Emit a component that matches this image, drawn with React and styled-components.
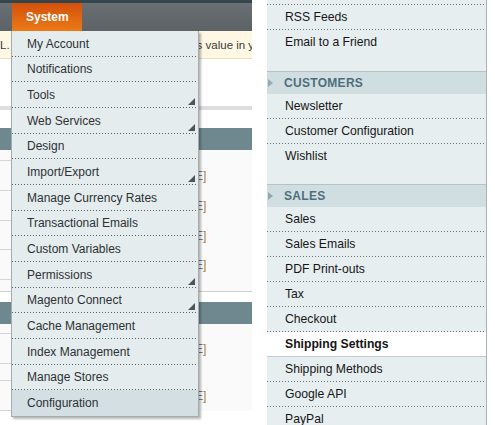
import React from 'react'
import styled, {createGlobalStyle} from 'styled-components'

const GlobalStyle=createGlobalStyle`
  body{
    margin:0;
    background:#fff;
    font-family:"Liberation Sans",Arial,sans-serif;
    font-size:12px;
  }
`

const dots=(color,bg)=>`
  background:linear-gradient(to right,${color} 1px,transparent 1px) left bottom/3px 1px repeat-x,${bg};
`

const Page=styled.div`
  display:flex;
  width:495px;
  height:425px;
  overflow:hidden;
`

/* ---------- left screenshot (admin page with open System menu) ---------- */

const Shot=styled.div`
  position:relative;
  width:252px;
  flex:none;
  overflow:hidden;
  background:#fff;
`

const NavBar=styled.div`
  height:28px;
  border-top:3px solid #34454c;
  background:linear-gradient(#6a6f73,#5d6266);
  padding-left:12px;
  display:flex;
  align-items:flex-end;
`

const Tab=styled.div`
  width:70px;
  height:28px;
  box-sizing:border-box;
  padding-left:14px;
  display:flex;
  align-items:center;
  color:#fff;
  font-weight:bold;
  font-size:12px;
  background:linear-gradient(#d4500b,#eb7a17);
`

const Notice=styled.div`
  height:27px;
  border-bottom:1px solid #eedfb6;
  background:#fdf7e3;
  color:#3b3b3b;
  display:flex;
  align-items:center;
  white-space:nowrap;
  overflow:hidden;
  font-size:11.5px;
`

const NoticeTail=styled.span`
  margin-left:187px;
`

const Blank=styled.div`
  height:${p=>p.h}px;
  background:${p=>p.bg||'#fff'};
`

const Rule=styled.div`
  height:${p=>p.h||1}px;
  background:${p=>p.color||'#dcdcdc'};
`

const SlateHead=styled.div`
  height:22px;
  background:#6f8890;
`

const Grid=styled.div`
  background:#fafafa;
`

const GridRow=styled.div`
  height:${p=>p.h}px;
  background:linear-gradient(${p=>p.line||'#d4d4d4'},${p=>p.line||'#d4d4d4'}) left bottom/${p=>p.full?'100%':'190px'} 1px no-repeat;
  display:flex;
  align-items:center;
  padding-left:195px;
  font-size:12px;
  color:#6b7b82;
`

const Bracket=styled.span`
  color:#b27a3c;
`

const Menu=styled.ul`
  position:absolute;
  top:31px;
  left:11px;
  width:186px;
  margin:0;
  padding:0;
  list-style:none;
  border:1px solid #a3adb1;
  border-top:none;
  box-shadow:2px 2px 2px rgba(0,0,0,.28);
`

const MenuItem=styled.li`
  position:relative;
  height:25.67px;
  box-sizing:border-box;
  padding-left:15px;
  display:flex;
  align-items:center;
  color:#2e3133;
  font-size:12px;
  ${p=>p.last?`background:${p.active?'#d3dfe3':'#e4ecee'};`:dots('#5d6468',p.active?'#d3dfe3':'#e4ecee')}
`

const SubArrow=styled.svg`
  position:absolute;
  right:3px;
  bottom:3px;
`

/* ---------- right screenshot (configuration tabs) ---------- */

const Side=styled.div`
  width:219px;
  margin-left:15px;
  flex:none;
  border-right:1px solid #a8b3b7;
  background:#e6eef0;
`

const SideItem=styled.div`
  height:25px;
  box-sizing:border-box;
  padding:0 0 1px 18px;
  display:flex;
  align-items:center;
  color:#161616;
  font-size:12.2px;
  ${p=>p.current
    ?`background:#fff;font-weight:bold;border-bottom:1px solid #c3cdd0;`
    :p.last?'':dots('#6e7578','#e6eef0')}
`

const Stub=styled.div`
  height:5px;
  ${dots('#6e7578','#e6eef0')}
`

const GroupEnd=styled.div`
  height:${p=>p.h}px;
`

const SideHead=styled.div`
  height:23px;
  box-sizing:border-box;
  border-top:1px solid #b5c2c6;
  background:#d1dee1;
  display:flex;
  align-items:center;
  padding-left:1px;
  color:#4d6f7d;
  font-weight:bold;
  font-size:12px;
  letter-spacing:.3px;
`

const HeadArrow=styled.svg`
  margin-right:11px;
`

const MENU=[
  {label:'My Account'},
  {label:'Notifications'},
  {label:'Tools',sub:true},
  {label:'Web Services',sub:true},
  {label:'Design'},
  {label:'Import/Export',sub:true},
  {label:'Manage Currency Rates'},
  {label:'Transactional Emails'},
  {label:'Custom Variables'},
  {label:'Permissions',sub:true},
  {label:'Magento Connect',sub:true},
  {label:'Cache Management'},
  {label:'Index Management'},
  {label:'Manage Stores'},
  {label:'Configuration',active:true},
]

const Scope=()=><span>E<Bracket>]</Bracket></span>

const Head=({children})=>(
  <SideHead>
    <HeadArrow width="5" height="8" viewBox="0 0 5 8"><polygon points="0,0 5,4 0,8" fill="#93aab2"/></HeadArrow>
    {children}
  </SideHead>
)

export default function App(){
  return <>
    <GlobalStyle/>
    <Page>
      <Shot>
        <NavBar><Tab>System</Tab></NavBar>
        <Notice>L.<NoticeTail>s value in yo</NoticeTail></Notice>
        <Blank h={47}/>
        <Rule h={4} color="#dedede"/>
        <Blank h={18}/>
        <SlateHead/>
        <Grid>
          <GridRow h={11}/>
          <GridRow h={30}><Scope/></GridRow>
          <GridRow h={30}><Scope/></GridRow>
          <GridRow h={29}><Scope/></GridRow>
          <GridRow h={30}><Scope/></GridRow>
          <GridRow h={12} line="#cfcfcf" full/>
        </Grid>
        <Blank h={10}/>
        <SlateHead/>
        <Grid>
          <GridRow h={10}/>
          <GridRow h={30}><Scope/></GridRow>
          <GridRow h={17}/>
          <GridRow h={30}><Scope/></GridRow>
        </Grid>
        <Menu>
          {MENU.map((m,i)=>(
            <MenuItem key={m.label} active={m.active} last={i===MENU.length-1}>
              {m.label}
              {m.sub&&<SubArrow width="7" height="7" viewBox="0 0 7 7"><polygon points="7,0 7,7 0,7" fill="#4b555a"/></SubArrow>}
            </MenuItem>
          ))}
        </Menu>
      </Shot>
      <Side>
        <Stub/>
        <SideItem>RSS Feeds</SideItem>
        <SideItem last>Email to a Friend</SideItem>
        <GroupEnd h={16}/>
        <Head>CUSTOMERS</Head>
        <SideItem>Newsletter</SideItem>
        <SideItem>Customer Configuration</SideItem>
        <SideItem last>Wishlist</SideItem>
        <GroupEnd h={15}/>
        <Head>SALES</Head>
        <SideItem>Sales</SideItem>
        <SideItem>Sales Emails</SideItem>
        <SideItem>PDF Print-outs</SideItem>
        <SideItem>Tax</SideItem>
        <SideItem>Checkout</SideItem>
        <SideItem current>Shipping Settings</SideItem>
        <SideItem>Shipping Methods</SideItem>
        <SideItem>Google API</SideItem>
        <SideItem>PayPal</SideItem>
      </Side>
    </Page>
  </>
}
